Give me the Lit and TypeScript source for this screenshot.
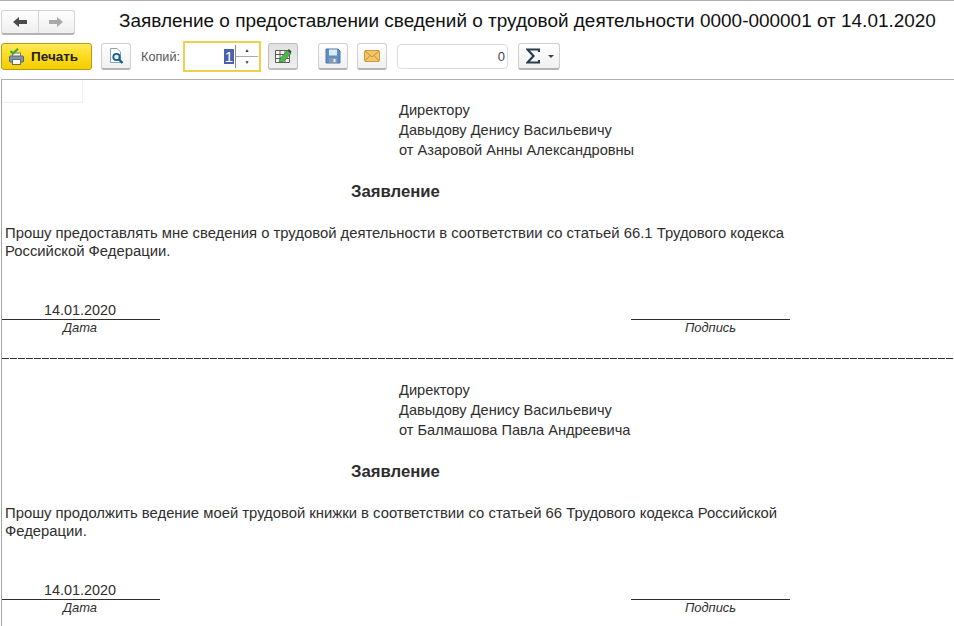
import { LitElement, html, css, svg } from "lit";
import { customElement } from "lit/decorators.js";

@customElement("doc-statement")
class DocStatement extends LitElement {
  static properties = { from: {}, body: {} };
  from = "";
  body = "";
  static styles = css`
    :host { display: block; height: 280px; color: #2e2e2e; font: 14.6px/20px "Liberation Sans", Arial, sans-serif; }
    .addr { padding: 20px 0 0 397px; }
    .title { margin: 22px 0 0 349px; font-size: 16.7px; font-weight: 700; height: 21px; }
    .para { margin: 21px 0 0 3px; width: 830px; font-size: 14.83px; line-height: 18px; height: 36px; }
    .sign { display: flex; justify-content: space-between; width: 788px; margin-top: 41px; }
    .col { width: 158px; text-align: center; }
    .col + .col { width: 159px; }
    .col:first-child { text-indent: -2px; }
    .val { height: 18px; line-height: 18px; border-bottom: 1px solid #2e2e2e; font-size: 14.4px; }
    .cap { font-size: 12.9px; font-style: italic; line-height: 16px; }
  `;
  render() {
    return html`
      <div class="addr">Директору<br />Давыдову Денису Васильевичу<br />${this.from}</div>
      <div class="title">Заявление</div>
      <div class="para">${this.body}</div>
      <div class="sign">
        <div class="col"><div class="val">14.01.2020</div><div class="cap">Дата</div></div>
        <div class="col"><div class="val"></div><div class="cap">Подпись</div></div>
      </div>
    `;
  }
}

const arrow = (dir: "l" | "r", c: string) => svg`<svg width="16" height="14" viewBox="0 0 16 14">
  <path d=${dir === "l" ? "M1 7 L7 2 V5 H15 V9 H7 V12 Z" : "M15 7 L9 2 V5 H1 V9 H9 V12 Z"} fill=${c} /></svg>`;

@customElement("app-root")
class AppRoot extends LitElement {
  static styles = css`
    :host { display: block; width: 954px; height: 626px; overflow: hidden; background: #fff; font-family: "Liberation Sans", Arial, sans-serif; position: relative; }
    .head { display: flex; align-items: center; height: 42px; padding: 0 0 0 1px; box-sizing: border-box; border-top: 1px solid #b0b0b0; }
    .nav { display: flex; width: 74px; height: 25px; margin-top: 1px; box-sizing: border-box; border: 1px solid #d2d2d2; border-bottom: 2px solid #b4b4b4; border-radius: 3px; background: linear-gradient(#fff, #eeeeee); }
    .nav div { flex: 1; display: flex; align-items: center; justify-content: center; }
    .nav div + div { border-left: 1px solid #d4d4d4; }
    .title { margin-left: 44px; font-size: 18.97px; color: #111; white-space: nowrap; position: relative; top: -1px; }
    .bar { display: flex; align-items: center; height: 27px; margin-top: 1px; padding-left: 1px; margin-bottom: 9px; }
    .print { width: 91px; height: 27px; box-sizing: border-box; display: flex; align-items: center; gap: 7px; padding-left: 7px; border: 1px solid #b89a10; border-radius: 3px; background: linear-gradient(#ffe95c, #fddc22 45%, #f5cd00); font-size: 13.5px; font-weight: 700; color: #222; }
    .btn { width: 30px; height: 27px; box-sizing: border-box; display: flex; align-items: center; justify-content: center; border: 1px solid #cfcfcf; border-bottom: 2px solid #b4b4b4; border-radius: 3px; background: linear-gradient(#fff, #f0f0f0); }
    .btn.on { background: linear-gradient(#e0e0e0, #f0f0f0); border-color: #bdbdbd; }
    .lbl { font-size: 12.7px; color: #555; margin: 0 3px 0 10px; }
    .spin { width: 78px; height: 31px; box-sizing: border-box; display: flex; align-items: center; justify-content: flex-end; border: 2px solid #f0cf4f; background: #fff; }
    .num { background: #4a5fae; color: #fff; font-size: 15px; line-height: 15px; height: 15px; padding: 0 1px; }
    .arrows { width: 22px; height: 23px; margin-left: 1px; margin-right: 1px; border-left: 1px solid #888; display: flex; flex-direction: column; position: relative; }
    .arrows::before { content: ""; position: absolute; left: 0; right: 0; top: 11px; border-top: 1px solid #aaa; }
    .arrows i { flex: 1; font-style: normal; font-size: 5px; line-height: 11px; text-align: center; color: #333; }
    .field { width: 111px; height: 25px; box-sizing: border-box; border: 1px solid #dcdcdc; border-radius: 4px; text-align: right; padding-right: 2px; font-size: 13px; line-height: 23px; color: #444; }
    .sum { width: 42px; height: 27px; box-sizing: border-box; display: flex; align-items: center; gap: 8px; padding-left: 7px; border: 1px solid #cfcfcf; border-bottom: 2px solid #b4b4b4; border-radius: 3px; background: linear-gradient(#fff, #f0f0f0); }
    .sheet { height: 547px; border-top: 1px solid #b0b0b0; border-left: 1px solid #a6a6a6; margin-left: 1px; position: relative; overflow: hidden; }
    .corner { position: absolute; left: 0; top: 0; width: 80px; height: 22px; border-right: 1px solid #f0f0f0; border-bottom: 1px solid #f0f0f0; }
    .dash { position: absolute; left: 0; right: 0; top: 278px; height: 1px; background: repeating-linear-gradient(90deg, #333 0 7px, #fff 7px 8px); }
    .m1 { margin-left: 9px; } .m3 { margin-left: 7px; } .m4 { margin-left: 20px; } .m5 { margin-left: 9px; } .m6 { margin-left: 10px; } .mf { margin-left: 10px; }
  `;
  render() {
    return html`
      <div class="head">
        <div class="nav"><div>${arrow("l", "#4a4a4a")}</div><div>${arrow("r", "#a8a8a8")}</div></div>
        <div class="title">Заявление о предоставлении сведений о трудовой деятельности 0000-000001 от 14.01.2020</div>
      </div>
      <div class="bar">
        <div class="print">
          <svg width="15" height="17" viewBox="0 0 15 17">
            <rect x="3.5" y="5" width="8" height="4" fill="#f5f5f5" stroke="#7a7a7a" />
            <rect x=".5" y="8" width="14" height="6" rx="1" fill="#7f97a8" stroke="#566874" />
            <rect x="3.5" y="11.5" width="8" height="5" fill="#fff" stroke="#6a6a6a" />
            <path d="M1.5 3 L4 5.5 L9 .8" fill="none" stroke="#3fa535" stroke-width="2.2" />
          </svg>
          Печать
        </div>
        <div class="btn m1">
          <svg width="18" height="18" viewBox="0 0 18 18">
            <path d="M3.5 1.5 H10 L13.5 5 V15.5 H3.5 Z" fill="#fff" stroke="#8aa3b5" />
            <circle cx="9.5" cy="10" r="3.2" fill="#e8f2f8" stroke="#14608c" stroke-width="1.8" />
            <path d="M12 12.5 L15.5 16" stroke="#14608c" stroke-width="2.4" />
          </svg>
        </div>
        <span class="lbl">Копий:</span>
        <div class="spin"><span class="num">1</span><div class="arrows"><i>▲</i><i>▼</i></div></div>
        <div class="btn on m3">
          <svg width="20" height="18" viewBox="0 0 20 18">
            <path d="M2.5 3.5 H16.5 V15.5 H2.5 Z M2.5 7.5 H16.5 M2.5 11.5 H16.5 M7 3.5 V15.5 M12 3.5 V15.5" fill="#f7f7f7" stroke="#5a5a5a" />
            <path d="M6 15.5 L7.5 11 L14.5 3.5 L18 6.5 L11 14 Z" fill="#4fb848" stroke="#2e7d2b" stroke-width=".7" />
            <path d="M14.5 3.5 L16 2 L18.5 4.5 L17.5 6.5 Z" fill="#444" />
          </svg>
        </div>
        <div class="btn m4">
          <svg width="16" height="16" viewBox="0 0 16 16">
            <path d="M1 1 H13 L15 3 V15 H1 Z" fill="#5d8fc4" stroke="#4a76a6" />
            <rect x="4" y="1.5" width="8" height="6" fill="#dfe9f3" />
            <rect x="4" y="10" width="8" height="5" fill="#8a9aab" />
            <rect x="8.5" y="11" width="2" height="3" fill="#e8eef4" />
          </svg>
        </div>
        <div class="btn m5">
          <svg width="16" height="14" viewBox="0 0 16 14">
            <rect x=".5" y="1.5" width="15" height="11" rx="1" fill="#f2c76c" stroke="#d09a3a" />
            <path d="M1 2 L8 8 L15 2 M1 12 L6 6.5 M15 12 L10 6.5" fill="none" stroke="#c98f2e" />
          </svg>
        </div>
        <div class="field mf">0</div>
        <div class="sum m6">
          <svg width="14" height="16" viewBox="0 0 14 16"><path d="M13 4 V1.5 H1.5 L7.5 8 L1.5 14.5 H13 V12" fill="none" stroke="#2a3d4c" stroke-width="2.2" /></svg>
          <svg width="6" height="3" viewBox="0 0 6 3"><path d="M0 0 H6 L3 3 Z" fill="#444" /></svg>
        </div>
      </div>
      <div class="sheet">
        <div class="corner"></div>
        <doc-statement from="от Азаровой Анны Александровны" body="Прошу предоставлять мне сведения о трудовой деятельности в соответствии со статьей 66.1 Трудового кодекса Российской Федерации."></doc-statement>
        <div class="dash"></div>
        <doc-statement from="от Балмашова Павла Андреевича" body="Прошу продолжить ведение моей трудовой книжки в соответствии со статьей 66 Трудового кодекса Российской Федерации."></doc-statement>
      </div>
    `;
  }
}
